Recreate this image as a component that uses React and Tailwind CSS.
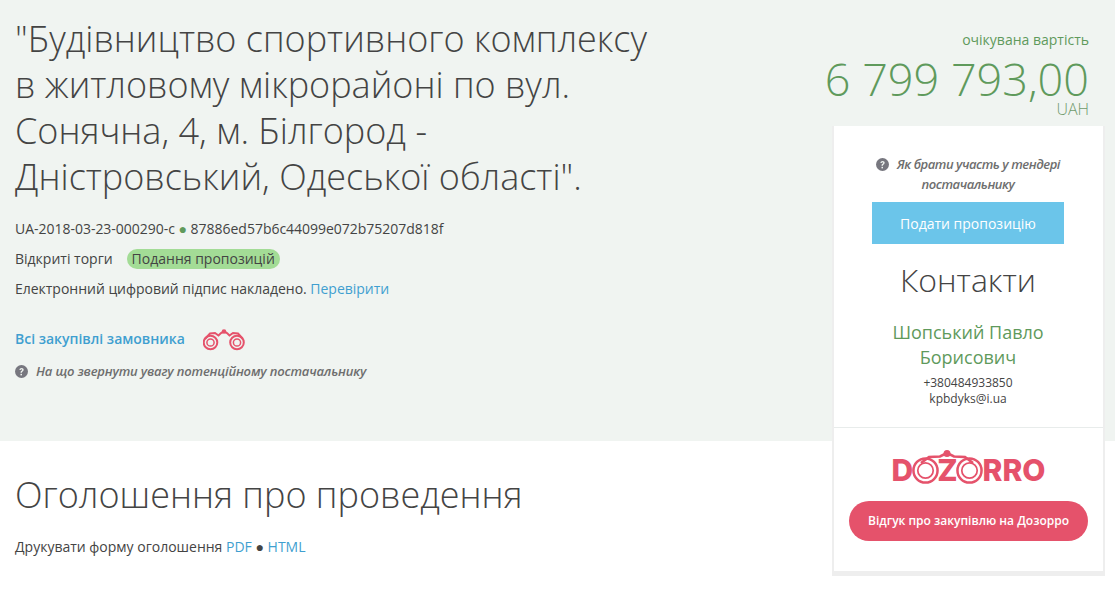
import React from 'react';

const sans = { fontFamily: '"Open Sans", sans-serif' };

const HelpIcon = ({ className }) => (
  <svg viewBox="0 0 24 24" className={className}>
    <circle cx="12" cy="12" r="12" fill="currentColor" />
    <path d="M8.2 9.3c.2-2.3 1.800-3.600 4-3.600 2.200 0 3.800 1.300 3.800 3.200 0 1.500-.9 2.300-1.900 3-.9.600-1.300 1-1.300 2v.4h-2.600v-.7c0-1.500.6-2.300 1.700-3 .9-.6 1.400-1 1.400-1.600 0-.7-.5-1.200-1.300-1.200-.9 0-1.400.6-1.500 1.500z" fill="#f0f4f1" />
    <rect x="10.100" y="16.300" width="2.800" height="2.800" fill="#f0f4f1" />
  </svg>
);

const Binoculars = ({ className }) => (
  <svg viewBox="0 0 42 22" fill="none" stroke="#e5526b" className={className}>
    <circle cx="7.500" cy="13.500" r="6.800" strokeWidth="2" />
    <circle cx="7.500" cy="13.500" r="3.600" strokeWidth="1.500" />
    <circle cx="34" cy="13.500" r="6.800" strokeWidth="2" />
    <circle cx="34" cy="13.500" r="3.600" strokeWidth="1.500" />
    <path d="M2 10l5-5.500 5-.5 3.500 2.500 2.500-2.500 3-1.500 3 1.500 2.500 2.500 3.500-2.500 5 .5 5 5.500" strokeWidth="2" />
    <circle cx="21" cy="2.500" r="2.300" fill="#e5526b" stroke="none" />
  </svg>
);

const LogoRing = () => (
  <svg viewBox="0 0 28 28" fill="none" stroke="#e5526b" className="w-[27px] h-[27px]">
    <circle cx="14" cy="14" r="12.500" strokeWidth="2.600" />
    <circle cx="14" cy="14" r="8" strokeWidth="1.800" />
  </svg>
);

function Logo() {
  return (
    <div className="relative flex items-end justify-center h-[33px] text-[#e5526b] font-extrabold text-[30px] leading-[25px]" style={{ fontFamily: 'Inter, sans-serif' }}>
      <span>D</span>
      <span className="ml-[-1px] mb-[-1px]"><LogoRing /></span>
      <span className="ml-[-2px]">Z</span>
      <span className="ml-[-2px] mb-[-1px]"><LogoRing /></span>
      <span>RRO</span>
      <svg viewBox="0 0 60 14" fill="none" stroke="#e5526b" strokeWidth="2.600" className="absolute left-[25px] top-0 w-[60px] h-[14px]">
        <path d="M4 13l8-6 11-.5 7-3.500 7 3.500 11 .5 8 6" />
        <circle cx="30" cy="3.500" r="3.500" fill="#e5526b" stroke="none" />
      </svg>
    </div>
  );
}

function Sidebar() {
  return (
    <aside className="absolute left-[832px] top-[126px] w-[273px] h-[450px] bg-white border-x-2 border-b-[5px] border-[#eeeeee] border-t-0 flex flex-col">
      <div className="h-[302px] pr-[1px] flex flex-col items-center border-b border-[#e8eceb]">
        <p className="w-[230px] mt-[28px] text-center text-[13px] leading-[20px] italic font-semibold text-[#6e6e6e] tracking-[-0.45px]">
          <HelpIcon className="inline-block w-[13px] h-[13px] mr-[8px] mb-[3px] text-[#77777f]" />
          Як брати участь у тендері постачальнику
        </p>
        <button className="mt-[8px] w-[192px] h-[42px] bg-[#6bc5ea] text-white text-[14px]">Подати пропозицію</button>
        <h2 className="mt-[14px] text-[32px] leading-[44px] font-light text-[#444444]">Контакти</h2>
        <p className="mt-[18px] w-[200px] text-center text-[#5f9a5c] text-[18px] leading-[25px]">Шопський Павло Борисович</p>
        <p className="mt-[5px] text-[12px] leading-[16px] text-[#444444]">+380484933850</p>
        <p className="text-[12px] leading-[16px] text-[#444444]">kpbdyks@i.ua</p>
      </div>
      <div className="flex flex-col items-center pt-[22px]">
        <Logo />
        <button className="mt-[18px] w-[239px] h-[40px] rounded-full bg-[#e5526b] text-white text-[12px] font-semibold">Відгук про закупівлю на Дозорро</button>
      </div>
    </aside>
  );
}

export default function App() {
  return (
    <div className="relative w-[1115px] h-[603px] overflow-hidden bg-white text-[#444444]" style={sans}>
      <section className="h-[441px] bg-[#f0f4f1] flex justify-between pl-[15px] pr-[26px]">
        <div className="w-[645px]">
          <h1 className="mt-[16px] text-[36px] leading-[46px] font-light">
            "Будівництво спортивного комплексу в житловому мікрорайоні по вул. Сонячна, 4, м. Білгород - Дністровський, Одеської області".
          </h1>
          <p className="mt-[19px] text-[14px] leading-[20px] tracking-[-0.02px]">
            UA-2018-03-23-000290-c <span className="text-[#5f9a5c]">●</span> 87886ed57b6c44099e072b75207d818f
          </p>
          <div className="mt-[10px] flex items-center text-[14px] leading-[20px]">
            <span>Відкриті торги</span>
            <span className="ml-[14px] px-[5px] rounded-full bg-[#a3dc96]">Подання пропозицій</span>
          </div>
          <p className="mt-[10px] text-[14px] leading-[20px] tracking-[-0.02px]">
            Електронний цифровий підпис накладено. <a className="text-[#3f9fd0]">Перевірити</a>
          </p>
          <div className="mt-[25px] flex items-center h-[28px]">
            <a className="text-[14px] font-semibold text-[#3f9fd0]">Всі закупівлі замовника</a>
            <Binoculars className="ml-[18px] mt-[3px] w-[42px] h-[22px]" />
          </div>
          <p className="mt-[9px] flex items-center text-[13px] leading-[20px] italic font-semibold text-[#6e6e6e] tracking-[-0.17px]">
            <HelpIcon className="w-[13px] h-[13px] mr-[8px] text-[#77777f]" />
            На що звернути увагу потенційному постачальнику
          </p>
        </div>
        <div className="text-right">
          <p className="mt-[30px] text-[14px] leading-[20px] text-[#5f9a5c]">очікувана вартість</p>
          <p className="mt-[6px] text-[45px] leading-[46px] font-light text-[#5f9a5c] whitespace-nowrap">6 799 793,00</p>
          <p className="mt-[-1px] text-[16px] leading-[16px] font-light text-[#6f9a6c]">UAH</p>
        </div>
      </section>
      <section className="pl-[15px]">
        <h2 className="mt-[31px] text-[36px] leading-[46px] font-light">Оголошення про проведення</h2>
        <p className="mt-[19px] text-[14px] leading-[20px]">
          Друкувати форму оголошення <a className="text-[#3f9fd0]">PDF</a> ● <a className="text-[#3f9fd0]">HTML</a>
        </p>
      </section>
      <Sidebar />
    </div>
  );
}
